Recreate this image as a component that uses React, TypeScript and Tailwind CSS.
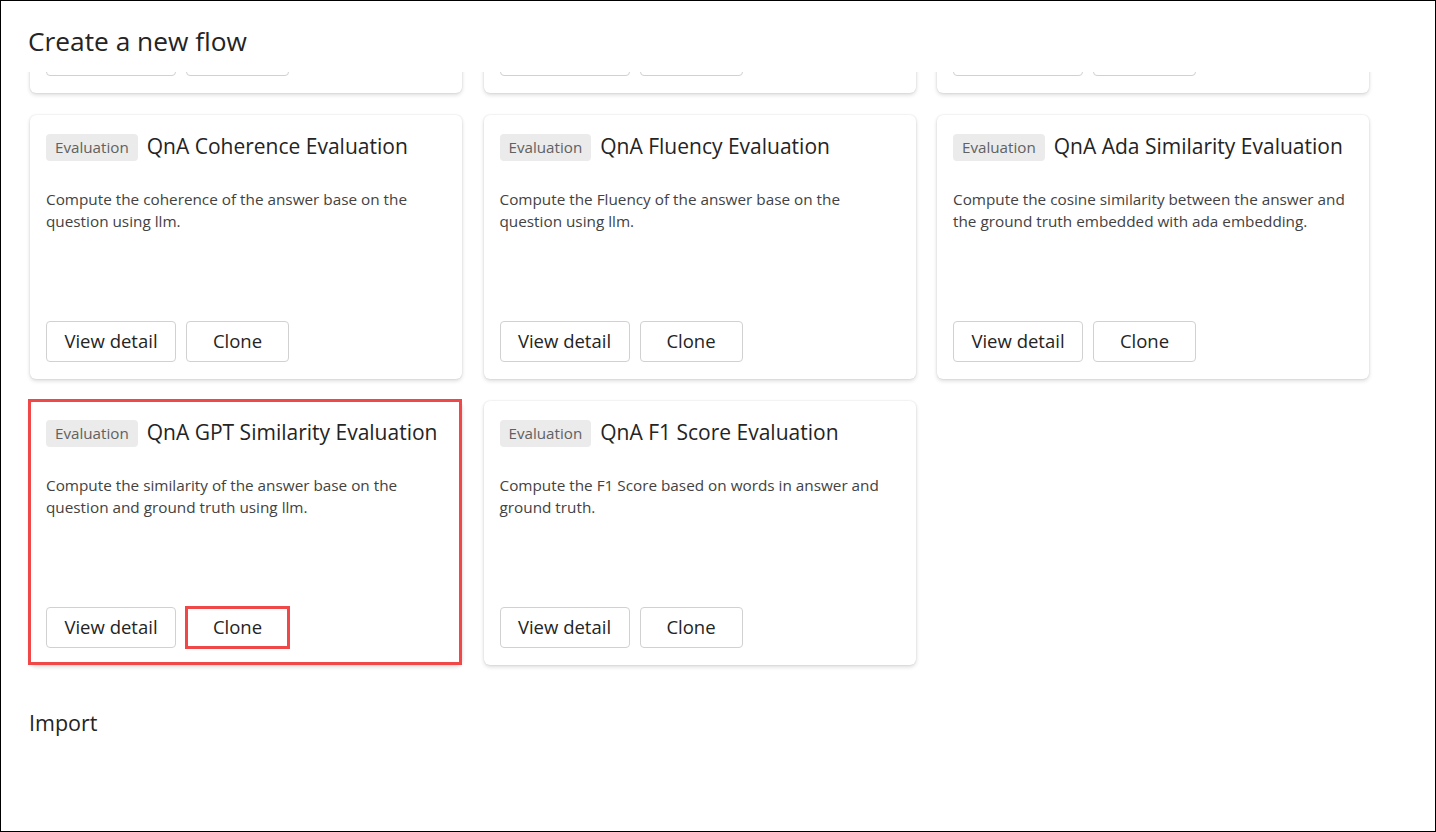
import React from 'react';

type Flow = {
  title: string;
  description: string;
};

const flows: Flow[] = [
  {
    title: 'Classification Accuracy Evaluation',
    description: 'Measuring the performance of a classification system by comparing its outputs to ground truth.',
  },
  {
    title: 'QnA Relevance Evaluation',
    description: 'Compute the relevance of the answer base on the question using llm.',
  },
  {
    title: 'QnA Groundedness Evaluation',
    description: 'Compute the groundedness of the answer base on the context using llm.',
  },
  {
    title: 'QnA Coherence Evaluation',
    description: 'Compute the coherence of the answer base on the question using llm.',
  },
  {
    title: 'QnA Fluency Evaluation',
    description: 'Compute the Fluency of the answer base on the question using llm.',
  },
  {
    title: 'QnA Ada Similarity Evaluation',
    description: 'Compute the cosine similarity between the answer and the ground truth embedded with ada embedding.',
  },
  {
    title: 'QnA GPT Similarity Evaluation',
    description: 'Compute the similarity of the answer base on the question and ground truth using llm.',
  },
  {
    title: 'QnA F1 Score Evaluation',
    description: 'Compute the F1 Score based on words in answer and ground truth.',
  },
];

function FlowCard({ flow, highlighted }: { flow: Flow; highlighted: boolean }) {
  return (
    <div className="relative h-[264px] bg-white rounded-[6px] shadow-[0_0_2px_rgba(0,0,0,0.12),0_2px_4px_rgba(0,0,0,0.14)] flex flex-col px-4 pt-[19px] pb-[17px]">
      <div className="flex items-start gap-[9px] h-[27px]">
        <span className="h-[27px] px-[9px] flex items-center rounded-[4px] bg-[#ebebeb] text-[#616161] text-[15.2px]">
          Evaluation
        </span>
        <span className="text-[21px] leading-[24px] text-[#242424] whitespace-nowrap">{flow.title}</span>
      </div>
      <p className="mt-[27px] text-[15.3px] leading-[22px] text-[#424242] flex-1">{flow.description}</p>
      <div className="flex gap-[10px]">
        <button className="h-[41px] w-[130px] rounded-[4px] border border-[#d1d1d1] bg-white text-[18.5px] font-medium text-[#242424] pb-[1px]">
          View detail
        </button>
        <div className="relative">
          <button className="h-[41px] w-[103px] rounded-[4px] border border-[#d1d1d1] bg-white text-[18.5px] font-medium text-[#242424] pb-[1px]">
            Clone
          </button>
          {highlighted && (
            <div className="absolute -inset-[1px] border-[3px] border-[#f04848] pointer-events-none" />
          )}
        </div>
      </div>
      {highlighted && (
        <div className="absolute -left-[2px] -top-[2px] right-0 bottom-0 border-[3px] border-[#f04848] pointer-events-none" />
      )}
    </div>
  );
}

export default function App() {
  return (
    <div
      className="w-[1436px] h-[832px] border border-black bg-white flex flex-col overflow-hidden"
      style={{ fontFamily: '"Segoe UI", "Open Sans", sans-serif' }}
    >
      <h1 className="pl-[27px] pt-[23px] text-[26.3px] leading-[34px] text-[#242424]">
        Create a new flow
      </h1>
      <div className="mt-[14px] flex-1 overflow-hidden pl-[29px]">
        <div className="-mt-[243px] grid grid-cols-[432px_432px_432px] gap-x-[21.5px] gap-y-[22px]">
          {flows.map((flow, i) => (
            <FlowCard key={flow.title} flow={flow} highlighted={i === 6} />
          ))}
        </div>
        <h2 className="mt-[44px] -ml-[1px] text-[21.5px] leading-[28px] text-[#242424]">Import</h2>
      </div>
    </div>
  );
}
